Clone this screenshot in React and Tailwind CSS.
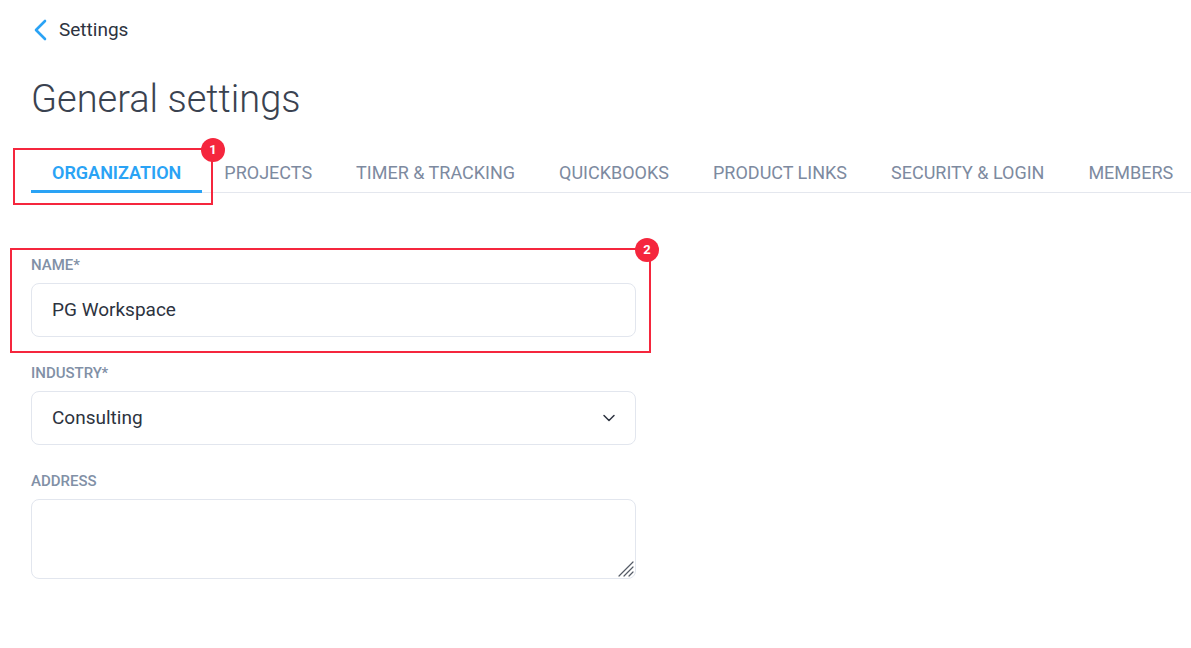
import React from "react";
import { ChevronDown } from "lucide-react";

const tabs = [
  "ORGANIZATION",
  "PROJECTS",
  "TIMER & TRACKING",
  "QUICKBOOKS",
  "PRODUCT LINKS",
  "SECURITY & LOGIN",
  "MEMBERS",
];

const Badge = ({ n, className }) => (
  <div
    className={`absolute w-6 h-6 rounded-full bg-[#f5263d] text-white text-[13px] font-bold flex items-center justify-center ${className}`}
  >
    {n}
  </div>
);

const Label = ({ children }) => (
  <div className="text-[15px] leading-5 font-medium text-[#8190a6] mb-2">{children}</div>
);

export default function App() {
  return (
    <div
      className="relative min-h-screen bg-white pt-[19px] pl-[31px] overflow-hidden"
      style={{ fontFamily: "Roboto, 'Open Sans', sans-serif" }}
    >
      {/* back link */}
      <div className="flex items-center h-[22px]">
        <svg width="16" height="22" viewBox="0 0 16 22" className="ml-[2px]">
          <path d="M12 2 L3 11 L12 20" fill="none" stroke="#2aa3f5" strokeWidth="2.6" strokeLinecap="round" strokeLinejoin="round" />
        </svg>
        <span className="ml-[10px] text-[19px] text-[#2d3340]">Settings</span>
      </div>

      <h1 className="mt-[35px] text-[38px] leading-[46px] font-light text-[#3a4250]">General settings</h1>

      {/* tabs */}
      <div className="relative mt-[27px] flex border-b border-[#e4e7ee] whitespace-nowrap">
        {tabs.map((t, i) => (
          <div
            key={t}
            className={`h-[44px] shrink-0 flex items-center pt-[6px] text-[18px] border-b-[3px] -mb-px ${
              i === 0
                ? "border-[#2aa3f5] text-[#2aa3f5] font-semibold pl-[21px] pr-[21px]"
                : "border-transparent text-[#7d8aa0] px-[22px]"
            }`}
          >
            {t}
          </div>
        ))}
      </div>

      {/* form */}
      <div className="w-[605px] mt-[62px]">
        <Label>NAME*</Label>
        <div className="h-[54px] rounded-lg border border-[#e2e6ee] flex items-center px-5 text-[19px] text-[#2d3340]">
          PG Workspace
        </div>

        <div className="mt-[26px]">
          <Label>INDUSTRY*</Label>
          <div className="h-[54px] rounded-lg border border-[#e2e6ee] flex items-center justify-between pl-5 pr-4 text-[19px] text-[#2d3340]">
            <span>Consulting</span>
            <ChevronDown size={20} strokeWidth={1.8} className="text-[#2d3340]" />
          </div>
        </div>

        <div className="mt-[26px]">
          <Label>ADDRESS</Label>
          <div className="relative">
            <textarea
              className="block w-full h-[80px] rounded-lg border border-[#e2e6ee] resize-none outline-none px-5 py-3 text-[19px]"
              defaultValue=""
            />
            <svg width="18" height="18" viewBox="0 0 18 18" className="absolute right-[2px] bottom-[2px]">
              <path d="M17 3 L3 17 M17 8 L8 17 M17 13 L13 17" stroke="#555b66" strokeWidth="1.2" strokeLinecap="round" />
            </svg>
          </div>
        </div>
      </div>

      {/* annotations */}
      <div className="absolute left-[13px] top-[148px] w-[200px] h-[57px] border-2 border-[#f5263d]" />
      <Badge n="1" className="left-[201px] top-[138px]" />
      <div className="absolute left-[10px] top-[248px] w-[641px] h-[105px] border-2 border-[#f5263d]" />
      <Badge n="2" className="left-[635px] top-[238px]" />
    </div>
  );
}
